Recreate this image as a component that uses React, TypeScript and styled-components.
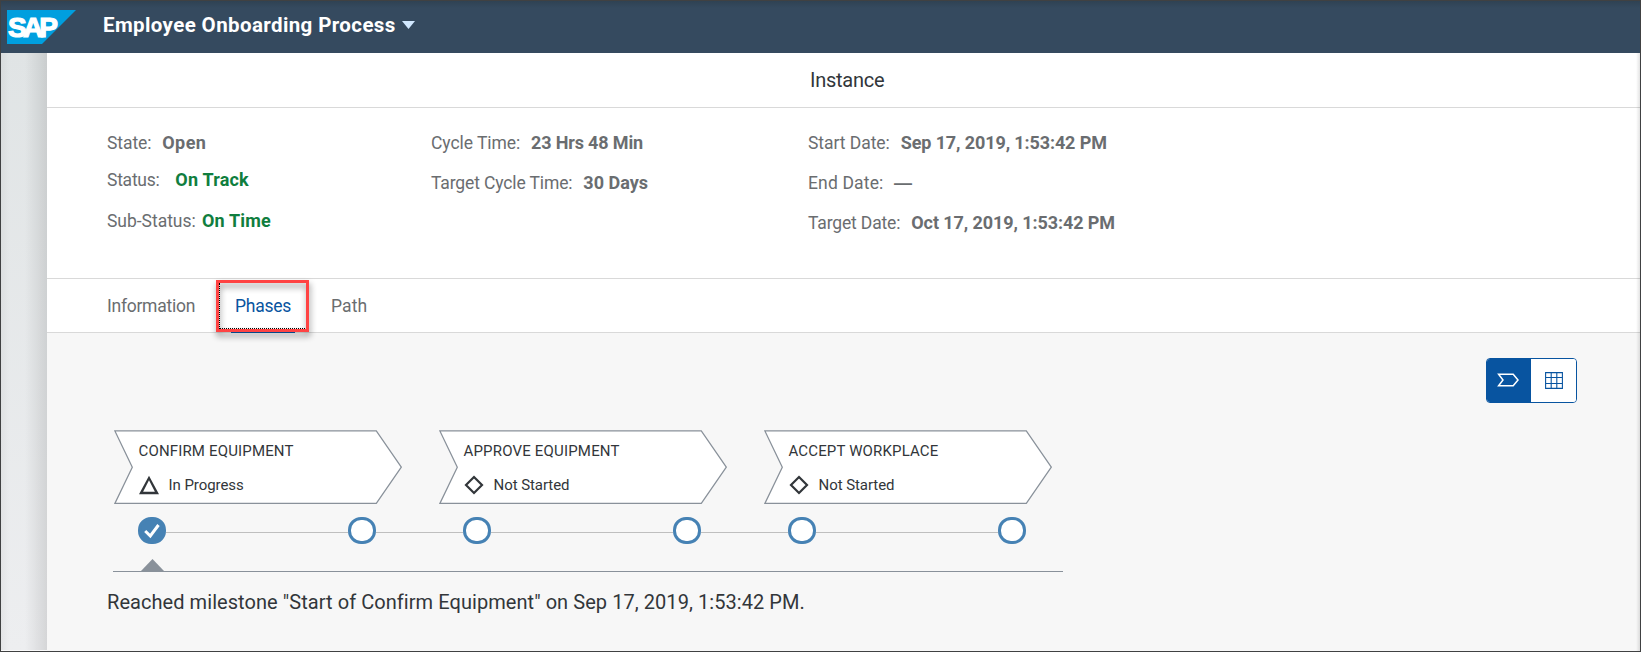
import React from 'react';
import styled, { createGlobalStyle } from 'styled-components';

const GlobalStyle = createGlobalStyle`
  * { box-sizing: border-box; }
  body { margin: 0; font-family: Roboto, "Liberation Sans", sans-serif; color: #32363a; }
`;

const Frame = styled.div`
  position: relative;
  display: flex;
  flex-direction: column;
  width: 1641px;
  height: 652px;
  border: 1px solid #404142;
  overflow: hidden;
  background: #f7f7f7;
  &::after {
    content: '';
    position: absolute;
    top: 52px;
    right: 0;
    bottom: 0;
    width: 4px;
    background: linear-gradient(90deg, rgba(0, 0, 0, 0), rgba(0, 0, 0, 0.11));
  }
`;

const Shell = styled.header`
  display: flex;
  align-items: flex-start;
  flex: none;
  height: 52px;
  padding: 9px 0 0 6px;
  background: linear-gradient(180deg, #2f4253 0, #354a5f 7px);
`;

const Logo = styled.svg`
  display: block;
  width: 69px;
  height: 34px;
`;

const ShellTitle = styled.h1`
  display: flex;
  align-items: center;
  gap: 6px;
  margin: 2px 0 0 27px;
  font-size: 20.5px;
  line-height: 26px;
  font-weight: 700;
  letter-spacing: 0.39px;
  white-space: nowrap;
  color: #fff;
`;

const DownArrow = styled.svg`
  width: 13px;
  height: 8px;
`;

const Body = styled.div`
  display: flex;
  flex: 1;
  min-height: 0;
`;

const SideStrip = styled.aside`
  width: 46px;
  flex: none;
  border-bottom: 1px solid #fafafa;
  background:
    linear-gradient(90deg, rgba(0, 0, 0, 0.04) 0, rgba(0, 0, 0, 0) 8px, rgba(0, 0, 0, 0) 24px, rgba(0, 0, 0, 0.1) 46px),
    linear-gradient(180deg, #e0e4e5 0%, #edeef0 100%);
`;

const Page = styled.main`
  flex: 1;
  display: flex;
  flex-direction: column;
`;

const PageTitle = styled.h2`
  height: 55px;
  margin: 0;
  padding: 14px 0 0 763px;
  border-bottom: 1px solid #d9d9d9;
  background: #fff;
  font-size: 20px;
  line-height: 26px;
  font-weight: 400;
  letter-spacing: -0.25px;
`;

const Facts = styled.section`
  display: grid;
  grid-template-columns: 324px 377px 1fr;
  height: 171px;
  padding: 25px 0 0 60px;
  border-bottom: 1px solid #d9d9d9;
  background: #fff;
`;

const FactColumn = styled.div`
  display: flex;
  flex-direction: column;
  gap: 20px;
`;

const Fact = styled.div<{ $label: number; $shift?: number }>`
  display: grid;
  grid-template-columns: ${p => p.$label}px auto;
  align-items: baseline;
  height: 20px;
  margin-top: ${p => p.$shift ?? 0}px;
  line-height: 20px;
  white-space: nowrap;
  color: #6a6d70;
`;

const Label = styled.span<{ $ls: number }>`
  font-size: 17.5px;
  letter-spacing: ${p => p.$ls}px;
`;

const Value = styled.span<{ $ls: number; $good?: boolean; $empty?: boolean }>`
  font-family: ${p => (p.$empty ? '"Liberation Sans", sans-serif' : 'inherit')};
  font-size: 18px;
  font-weight: 700;
  letter-spacing: ${p => p.$ls}px;
  color: ${p => (p.$good ? '#107e3e' : '#6a6d70')};
`;

const TabBar = styled.nav`
  display: flex;
  height: 54px;
  padding-left: 60px;
  border-bottom: 1px solid #d9d9d9;
  background: #fff;
`;

const Tab = styled.a<{ $ls: number; $width: number; $active?: boolean }>`
  position: relative;
  width: ${p => p.$width}px;
  height: 54px;
  padding-top: 17px;
  font-size: 17.5px;
  line-height: 20px;
  letter-spacing: ${p => p.$ls}px;
  color: ${p => (p.$active ? '#0854a0' : '#6a6d70')};
  &::after {
    content: '';
    display: ${p => (p.$active ? 'block' : 'none')};
    position: absolute;
    left: -4px;
    bottom: 0;
    width: 64px;
    height: 2px;
    background: #0854a0;
  }
`;

const FocusRing = styled.span`
  position: absolute;
  left: -16px;
  top: 4px;
  width: 88px;
  height: 46px;
  border-left: 1px dotted #000;
  border-bottom: 1px dotted #000;
`;

const Highlight = styled.span`
  position: absolute;
  z-index: 1;
  left: -19px;
  top: 1px;
  width: 93px;
  height: 52px;
  border: 3px solid #ff4343;
  filter: drop-shadow(1px 4px 3px rgba(0, 0, 0, 0.45));
`;

const Content = styled.section`
  flex: 1;
  display: flex;
  flex-direction: column;
  padding-top: 25px;
`;

const Toggle = styled.div`
  display: flex;
  align-self: flex-end;
  width: 91px;
  height: 45px;
  margin-right: 63px;
  border: 1px solid #0854a0;
  border-radius: 4px;
  overflow: hidden;
  background: #fff;
`;

const ToggleButton = styled.button<{ $on?: boolean }>`
  display: flex;
  align-items: center;
  justify-content: center;
  width: ${p => (p.$on ? 44 : 45)}px;
  padding: 0 ${p => (p.$on ? 1 : 0)}px 1px 0;
  border: 0;
  background: ${p => (p.$on ? '#0854a0' : '#fff')};
  color: ${p => (p.$on ? '#fff' : '#0854a0')};
`;

const PhaseRow = styled.div`
  display: flex;
  gap: 37px;
  margin: 27px 0 0 67px;
`;

const PhaseCard = styled.article`
  position: relative;
  width: 288px;
  height: 74px;
  padding: 11px 0 0 24.5px;
`;

const PhaseShape = styled.svg`
  position: absolute;
  inset: 0;
`;

const PhaseName = styled.div<{ $ls: number }>`
  position: relative;
  font-size: 15px;
  line-height: 20px;
  letter-spacing: ${p => p.$ls}px;
`;

const PhaseState = styled.div`
  position: relative;
  display: flex;
  align-items: center;
  gap: 10px;
  margin-top: 14px;
  font-size: 15px;
  line-height: 20px;
  letter-spacing: -0.06px;
`;

const Track = styled.div`
  display: flex;
  align-items: center;
  margin: 13px 0 0 91px;
`;

const Milestone = styled.span<{ $done?: boolean }>`
  display: flex;
  align-items: center;
  justify-content: center;
  width: 28px;
  height: 27px;
  border: 3px solid #4682b4;
  border-radius: 13px;
  background: ${p => (p.$done ? '#4682b4' : '#fff')};
`;

const Link = styled.span<{ $width: number }>`
  width: ${p => p.$width}px;
  height: 1px;
  margin-top: 3px;
  background: #bfbfbf;
`;

const Pointer = styled.div`
  width: 950px;
  height: 13px;
  margin: 15px 0 0 66px;
  padding-left: 28px;
  border-bottom: 1px solid #89919a;
`;

const PointerMark = styled.svg`
  display: block;
  width: 23px;
  height: 12px;
`;

const Message = styled.p`
  margin: 17px 0 0 60px;
  font-size: 20px;
  line-height: 26px;
  letter-spacing: 0.06px;
  white-space: nowrap;
`;

type FactData = {
  label: string;
  ls: number;
  at: number;
  value: string;
  vls: number;
  good?: boolean;
  shift?: number;
};

const facts: FactData[][] = [
  [
    { label: 'State:', ls: -0.08, at: 55.3, value: 'Open', vls: 0.415 },
    { label: 'Status:', ls: -0.25, at: 68.3, value: 'On Track', vls: 0.2, good: true, shift: -3 },
    { label: 'Sub-Status:', ls: -0.03, at: 95, value: 'On Time', vls: 0.15, good: true, shift: 1 },
  ],
  [
    { label: 'Cycle Time:', ls: -0.055, at: 100, value: '23 Hrs 48 Min', vls: -0.15 },
    { label: 'Target Cycle Time:', ls: -0.13, at: 152.3, value: '30 Days', vls: 0.02 },
  ],
  [
    { label: 'Start Date:', ls: -0.05, at: 92.7, value: 'Sep 17, 2019, 1:53:42 PM', vls: -0.11 },
    { label: 'End Date:', ls: 0.16, at: 86, value: '—', vls: 0 },
    { label: 'Target Date:', ls: -0.16, at: 103.3, value: 'Oct 17, 2019, 1:53:42 PM', vls: -0.086 },
  ],
];

const phases = [
  { name: 'CONFIRM EQUIPMENT', ls: 0.16, state: 'In Progress' },
  { name: 'APPROVE EQUIPMENT', ls: 0.18, state: 'Not Started' },
  { name: 'ACCEPT WORKPLACE', ls: 0.15, state: 'Not Started' },
];

function StateIcon({ open }: { open: boolean }) {
  return (
    <svg width="20" height="20" viewBox="0 0 20 20" fill="none" stroke="#32363a">
      {open ? (
        <path fill="#32363a" stroke="none" fillRule="evenodd" d="M10 .7 20 19.3H0zM10 5.2 4.1 16.8h11.8z" />
      ) : (
        <path strokeWidth="2.2" d="M10 2 18 10 10 18 2 10z" />
      )}
    </svg>
  );
}

export default function App() {
  return (
    <Frame>
      <GlobalStyle />
      <Shell>
        <Logo viewBox="0 0 69 34">
          <path d="M0 0h69L35 34H0z" fill="#009fdf" />
          <text
            x="1"
            y="26.8"
            fontFamily="Liberation Sans, sans-serif"
            fontWeight="700"
            fontSize="28"
            fill="#fff"
            stroke="#fff"
            strokeWidth="1.2"
            textLength="50"
            lengthAdjust="spacing"
          >
            SAP
          </text>
        </Logo>
        <ShellTitle>
          Employee Onboarding Process
          <DownArrow viewBox="0 0 13 8">
            <path d="M0 0h13L6.5 8z" fill="#d1e8ff" />
          </DownArrow>
        </ShellTitle>
      </Shell>
      <Body>
        <SideStrip />
        <Page>
          <PageTitle>Instance</PageTitle>
          <Facts>
            {facts.map((column, i) => (
              <FactColumn key={i}>
                {column.map(f => (
                  <Fact key={f.label} $label={f.at} $shift={f.shift}>
                    <Label $ls={f.ls}>{f.label}</Label>
                    <Value $ls={f.vls} $good={f.good} $empty={f.value === '—'}>
                      {f.value}
                    </Value>
                  </Fact>
                ))}
              </FactColumn>
            ))}
          </Facts>
          <TabBar>
            <Tab $ls={-0.26} $width={128}>Information</Tab>
            <Tab $ls={-0.26} $width={96} $active>
              Phases
              <FocusRing />
              <Highlight />
            </Tab>
            <Tab $ls={0.1} $width={60}>Path</Tab>
          </TabBar>
          <Content>
            <Toggle>
              <ToggleButton $on aria-label="Phase view">
                <svg width="23" height="14" viewBox="0 0 23 14" fill="none" stroke="currentColor" strokeWidth="1.5">
                  <path d="M1.6 1.2h14.6L21 7l-4.8 5.8H1.6L6 7z" />
                </svg>
              </ToggleButton>
              <ToggleButton aria-label="Table view">
                <svg width="18" height="17" viewBox="0 0 18 17" fill="none" stroke="currentColor" strokeWidth="1.1">
                  <path d="M.6.6h16.8v15.8H.6zM6.2.6v15.8M11.8.6v15.8M.6 5.5h16.8M.6 11.5h16.8" />
                </svg>
              </ToggleButton>
            </Toggle>
            <PhaseRow>
              {phases.map((p, i) => (
                <PhaseCard key={p.name}>
                  <PhaseShape width="288" height="74" viewBox="0 0 288 74">
                    <path d="M.9.9H262.3L287.3 37.2 262.3 73.4H.9L18.3 37.2z" fill="#fff" stroke="#89919a" strokeWidth="1.25" />
                  </PhaseShape>
                  <PhaseName $ls={p.ls}>{p.name}</PhaseName>
                  <PhaseState>
                    <StateIcon open={i === 0} />
                    {p.state}
                  </PhaseState>
                </PhaseCard>
              ))}
            </PhaseRow>
            <Track>
              {phases.map((p, i) => (
                <React.Fragment key={p.name}>
                  {i > 0 && <Link $width={87} />}
                  <Milestone $done={i === 0}>
                    {i === 0 && (
                      <svg width="16" height="16" viewBox="0 0 16 16" fill="none" stroke="#fff" strokeWidth="3">
                        <path d="M1.2 8 6.3 13 14.5 2" />
                      </svg>
                    )}
                  </Milestone>
                  <Link $width={182} />
                  <Milestone />
                </React.Fragment>
              ))}
            </Track>
            <Pointer>
              <PointerMark viewBox="0 0 23 12">
                <path d="M11.5 0 23 12H0z" fill="#89919a" />
              </PointerMark>
            </Pointer>
            <Message>Reached milestone "Start of Confirm Equipment" on Sep 17, 2019, 1:53:42 PM.</Message>
          </Content>
        </Page>
      </Body>
    </Frame>
  );
}
